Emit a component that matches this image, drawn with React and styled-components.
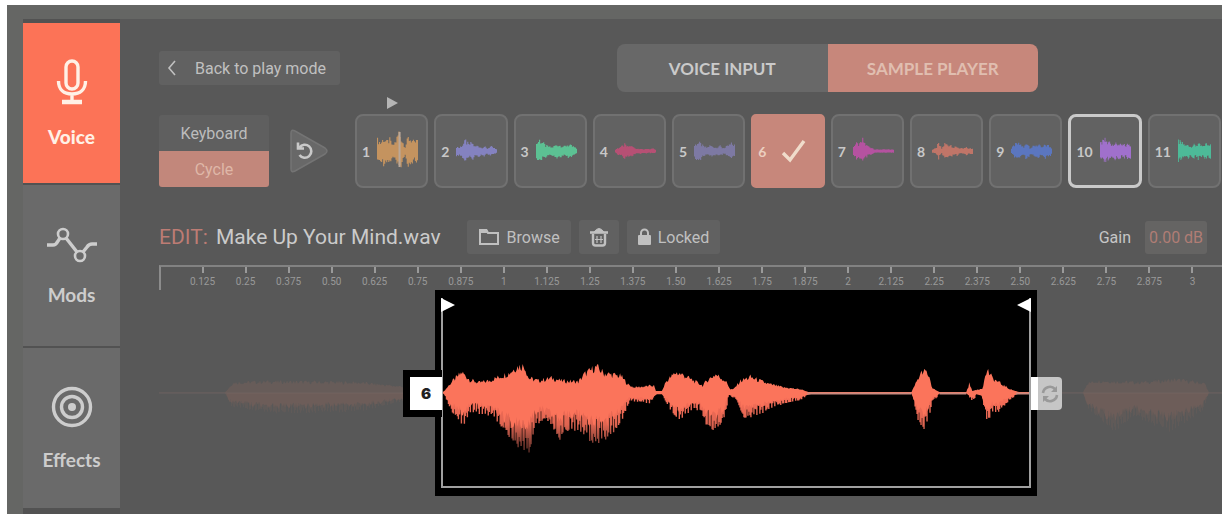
import React from 'react';
import styled, { createGlobalStyle } from 'styled-components';

const GlobalStyle = createGlobalStyle`
  * { box-sizing: border-box; }
  body { margin: 0; background: #fff; }
  button, input { font: inherit; color: inherit; border: 0; margin: 0; padding: 0; }
  button { cursor: pointer; }
  svg { display: block; }
`;

const Frame = styled.div`
  margin: 5px 4px 4px 7px;
  padding: 14px 0 0 16px;
  background: #656664;
  color: #c6c6c6;
  font-family: Roboto, sans-serif;
  font-size: 16px;
`;

const Shell = styled.div`
  display: flex;
  background: #585858;
`;

const Sidebar = styled.nav`
  flex: 0 0 97px;
  display: flex;
  flex-direction: column;
  gap: 2px;
  padding: 4px 0 6px;
  background: #525252;
`;

const SideButton = styled.button`
  flex: 1;
  display: flex;
  flex-direction: column;
  align-items: center;
  justify-content: center;
  gap: 22px;
  background: ${(p) => (p.$active ? '#fc7357' : '#6a6a6a')};
  color: ${(p) => (p.$active ? '#fff1e6' : '#cdcdcd')};
  font-family: Lato, sans-serif;
  font-size: 19px;
  line-height: 20px;
  font-weight: ${(p) => (p.$active ? 900 : 700)};
`;

const Main = styled.main`
  flex: 1;
  min-width: 0;
  padding: 25px 0 0 39px;
`;

const Header = styled.div`
  display: flex;
  align-items: center;
  justify-content: space-between;
  padding-right: 184px;
`;

const FlatButton = styled.button`
  display: flex;
  align-items: center;
  justify-content: center;
  gap: 7px;
  height: 34px;
  padding: 0 11px;
  border-radius: 3px;
  background: #616161;
  color: #c0c0c0;
`;

const BackButton = styled(FlatButton)`
  gap: 18px;
  padding: 0 14px 0 8px;
`;

const Tabs = styled.div`
  display: grid;
  grid-template-columns: 1fr 1fr;
  width: 421px;
  height: 48px;
  border-radius: 8px;
  overflow: hidden;
`;

const Tab = styled.button`
  background: ${(p) => (p.$active ? '#c7877b' : '#686868')};
  color: ${(p) => (p.$active ? '#e0beb0' : '#cacaca')};
  font-family: Lato, sans-serif;
  font-size: 17px;
  font-weight: 700;
`;

const SampleRow = styled.div`
  display: flex;
  align-items: center;
  margin-top: 22px;
  padding-right: 1px;
`;

const ModeSwitch = styled.div`
  flex: 0 0 110px;
  display: grid;
  grid-template-rows: 36px 36px;
  border-radius: 3px;
  overflow: hidden;
`;

const ModeButton = styled.button`
  background: ${(p) => (p.$active ? '#c2877b' : '#5f5f5f')};
  color: ${(p) => (p.$active ? '#dfb7a8' : '#bcbcbc')};
`;

const CycleButton = styled.button`
  margin: 0 26px 0 20px;
  background: none;
`;

const Slots = styled.div`
  flex: 1;
  display: grid;
  grid-template-columns: repeat(11, minmax(0, 1fr));
  gap: 6px;
`;

const Slot = styled.button`
  position: relative;
  height: 74px;
  display: flex;
  align-items: center;
  gap: 7px;
  padding: 0 ${(p) => (p.$active ? 16 : 8)}px 0 5px;
  border: ${(p) => (p.$focused ? '3px solid #cacaca' : '2px solid #717171')};
  border-radius: 8px;
  background: #626262;
  color: #c8c8c8;
  font-family: Lato, sans-serif;
  font-size: 14px;
  font-weight: 700;
  ${(p) => p.$active && 'background: #c7877b; border-color: #c7877b; border-radius: 5px; color: #ebcfc0; justify-content: space-between;'}

  svg { min-width: 0; }
`;

const PlayMarker = styled.span`
  position: absolute;
  top: -19px;
  left: 50%;
  margin-left: -6px;
`;

const EditRow = styled.div`
  display: flex;
  align-items: center;
  gap: 8px;
  margin-top: 32px;
  padding-right: 15px;
`;

const FileName = styled.h1`
  margin: 0 18px 0 0;
  font-size: 21px;
  line-height: 24px;
  font-weight: 400;
  white-space: nowrap;
  color: #cbcbcb;
`;

const Accent = styled.span`
  margin-right: 3px;
  color: #bd7c74;
`;

const Gain = styled.label`
  display: flex;
  align-items: center;
  gap: 14px;
  margin-left: auto;
`;

const GainInput = styled.input`
  width: 62px;
  height: 33px;
  border-radius: 3px;
  background: #656463;
  color: #b07d75;
  text-align: center;
`;

const Ruler = styled.div`
  display: grid;
  grid-template-columns: repeat(24, minmax(0, 1fr));
  height: 25px;
  margin-top: 11px;
  padding: 0 8px 0 20px;
  border-top: 2px solid #828282;
  border-left: 2px solid #8c8c8c;
`;

const Mark = styled.span`
  display: flex;
  flex-direction: column;
  align-items: center;
  gap: 3px;
  font-size: 10px;
  line-height: 12px;
  color: #999;

  &::before {
    content: '';
    width: 2px;
    height: 6px;
    background: #9a9a9a;
  }
`;

const Editor = styled.section`
  display: grid;
  grid-template-columns: 276fr 602fr 185fr;
  height: 224px;

  > svg {
    width: 100%;
    height: 206px;
  }
`;

const Selection = styled.div`
  position: relative;
  height: 206px;
  padding: 8px 6px;
  background: #000;
`;

const SelectionBody = styled.div`
  height: 190px;
  border: 2px solid #a0a0a0;
  border-top: 0;

  svg {
    width: 100%;
    height: 188px;
  }
`;

const Flag = styled.span`
  position: absolute;
  top: 8px;
  ${(p) => p.$side}: 6px;
`;

const StartHandle = styled.button`
  position: absolute;
  top: 80px;
  left: -32px;
  width: 39px;
  height: 47px;
  border: 7px solid #000;
  border-right: 0;
  background: #fff;
  color: #222;
  font-family: Inter, sans-serif;
  font-size: 15px;
  font-weight: 900;
`;

const LoopHandle = styled.button`
  position: absolute;
  top: 87px;
  right: -25px;
  display: flex;
  align-items: center;
  justify-content: center;
  width: 31px;
  height: 33px;
  border-left: 7px solid #fff;
  border-radius: 0 4px 4px 0;
  background: #c6c6c6;
`;

// Envelopes are [x, height] pairs, linear between the points.
const TOP = [[0, 1], [1, 2], [9, 12], [19, 22], [27, 14], [36, 11], [46, 13], [56, 17], [66, 21], [74, 28], [82, 29], [86, 16], [96, 13], [109, 16], [119, 13], [136, 12], [142, 20], [154, 28], [162, 21], [179, 18], [186, 9], [192, 6], [212, 8], [214, 2], [220, 2], [224, 12], [234, 22], [242, 19], [252, 13], [261, 8], [266, 14], [274, 20], [284, 13], [289, 4], [292, 4], [299, 13], [309, 17], [326, 10], [342, 6], [359, 4], [367, 1], [471, 1], [476, 12], [482, 24], [487, 21], [492, 5], [497, 2], [499, 1], [526, 1], [529, 10], [532, 2], [542, 5], [547, 25], [552, 16], [562, 9], [572, 3], [579, 1], [589, 1]];
const BOTTOM = [[0, 1], [1, 2], [9, 20], [20, 33], [29, 18], [36, 20], [49, 23], [62, 40], [76, 56], [86, 62], [92, 30], [106, 27], [116, 46], [122, 40], [136, 36], [149, 48], [162, 48], [176, 34], [187, 8], [207, 10], [215, 2], [220, 2], [226, 13], [236, 28], [252, 15], [258, 18], [262, 28], [271, 39], [281, 30], [287, 3], [294, 6], [302, 26], [312, 22], [322, 19], [332, 13], [346, 10], [359, 7], [366, 3], [372, 1], [471, 1], [477, 27], [483, 37], [489, 19], [492, 7], [496, 5], [499, 1], [526, 1], [532, 8], [536, 2], [541, 4], [547, 32], [552, 18], [557, 20], [562, 14], [572, 5], [579, 1], [589, 1]];

const GHOST_LEFT_TOP = [[0, 0.5], [66, 0.5], [74, 11], [110, 12], [200, 11], [240, 7], [276, 6]];
const GHOST_LEFT_BOTTOM = [[0, 0.5], [66, 0.5], [72, 14], [120, 20], [200, 18], [240, 9], [276, 7]];
const GHOST_RIGHT_TOP = [[0, 0.5], [46, 0.5], [50, 10], [60, 13], [100, 11], [140, 14], [168, 10], [172, 0.5], [185, 0.5]];
const GHOST_RIGHT_BOTTOM = [[0, 0.5], [46, 0.5], [50, 16], [78, 40], [95, 22], [132, 38], [165, 18], [172, 0.5], [185, 0.5]];

const noise = (n) => {
  const v = Math.sin(n * 12.9898) * 43758.5453;
  return v - Math.floor(v);
};

const at = (points, x) => {
  const i = points.findIndex((p) => p[0] >= x);
  if (i < 1) return points[i < 0 ? points.length - 1 : 0][1];
  const [x0, y0] = points[i - 1];
  const [x1, y1] = points[i];
  return y0 + ((y1 - y0) * (x - x0)) / (x1 - x0);
};

const wavePath = (top, bottom, width, mid, scale) => {
  let up = '';
  let down = '';
  for (let x = 0; x <= width; x += 1) {
    const t = at(top, x);
    const b = at(bottom, x) * scale;
    up += `L${x} ${(mid - t * (t > 3 ? 0.75 + noise(x) * 0.35 : 1)).toFixed(1)}`;
    down = `L${x} ${(mid + b * (b > 4 ? 0.7 + noise(x + 700) * 0.5 : 1)).toFixed(1)}${down}`;
  }
  return `M0 ${mid}${up}${down}Z`;
};

// Thin one-pixel strokes hanging below the body of the wave.
const spikes = (bottom, width, mid) => {
  let d = '';
  for (let x = 1; x < width; x += 1) {
    const b = at(bottom, x);
    const len = b * (x % 3 === 0 ? 0.9 + noise(x) * 0.15 : 0.5 + noise(x + 31) * 0.5);
    if (b > 4) d += `M${x + 0.5} ${mid}V${(mid + len).toFixed(1)}`;
  }
  return d;
};

const Waveform = () => (
  <svg viewBox="0 0 589 188" preserveAspectRatio="none" aria-hidden="true">
    <defs>
      <linearGradient id="tail" gradientUnits="userSpaceOnUse" x1="0" y1="95" x2="0" y2="158">
        <stop offset="0" stopColor="#f9705a" />
        <stop offset="0.5" stopColor="#f9705a" stopOpacity="0.9" />
        <stop offset="1" stopColor="#e0705f" stopOpacity="0.35" />
      </linearGradient>
    </defs>
    <path d={spikes(BOTTOM, 589, 95)} stroke="url(#tail)" strokeWidth="1.4" />
    <path d={wavePath(TOP, BOTTOM, 589, 95, 0.62)} fill="#fb745b" />
    <path d="M366 95.5H471M499 95.5H526M576 95.5H589" stroke="#c98a80" strokeWidth="2" />
  </svg>
);

const Ghost = ({ top, bottom, width }) => (
  <svg viewBox={`0 0 ${width} 206`} preserveAspectRatio="none" aria-hidden="true">
    <path d={`M0 103H${width}`} stroke="#6e6866" opacity="0.6" />
    <path d={spikes(bottom, width, 103)} stroke="#93695c" opacity="0.14" />
    <path d={wavePath(top, bottom, width, 103, 0.7)} fill="#93695c" opacity="0.26" />
  </svg>
);

const slots = [
  { color: '#c4935f', env: [11, 8, 12, 9, 11, 5, 10, 19, 10, 4, 13, 11, 8, 11] },
  { color: '#8482c0', env: [4, 3, 6, 10, 6, 8, 4, 5, 3, 4, 2, 4, 3, 1] },
  { color: '#5cc193', env: [7, 11, 8, 5, 4, 3, 5, 6, 5, 4, 6, 5, 4, 2] },
  { color: '#b65074', env: [1, 3, 4, 6, 4, 5, 3, 2, 2, 1, 2, 1, 2, 1] },
  { color: '#7d79a3', env: [5, 8, 7, 4, 3, 5, 4, 3, 5, 3, 3, 5, 7, 6] },
  { active: true },
  { color: '#b552a0', env: [5, 7, 6, 11, 6, 4, 3, 1, 1, 1, 1, 1, 1, 1] },
  { color: '#c07568', env: [1, 2, 7, 2, 7, 6, 6, 3, 4, 2, 2, 3, 2, 2] },
  { color: '#5b76bf', env: [2, 6, 7, 6, 3, 9, 3, 4, 6, 5, 3, 6, 5, 3] },
  { color: '#a070cc', env: [7, 9, 11, 8, 9, 6, 8, 6, 7, 5, 6, 5, 7, 6], focused: true },
  { color: '#4dba98', env: [10, 8, 7, 5, 6, 4, 6, 5, 7, 5, 4, 7, 6, 8] },
];

const SlotWave = ({ color, env, seed }) => {
  const points = env.map((h, i) => [i * 3, h]);
  let d = '';
  for (let x = 0; x < 40; x += 1) {
    const h = at(points, x);
    d += `M${x + 0.5} ${(19.5 - h * (0.6 + noise(x + seed) * 0.6)).toFixed(1)}V${(20.8 + h * (0.6 + noise(x + seed * 7) * 0.6)).toFixed(1)}`;
  }
  return (
    <svg width="41" height="40" viewBox="0 0 40 40" preserveAspectRatio="none" aria-hidden="true">
      <path d={d} stroke={color} strokeWidth="1.1" />
      {seed === 1 && <path d="M22 1V36" stroke="#b9a89a" strokeWidth="2" />}
    </svg>
  );
};

const marks = ['0.125', '0.25', '0.375', '0.50', '0.625', '0.75', '0.875', '1', '1.125', '1.25', '1.375', '1.50',
  '1.625', '1.75', '1.875', '2', '2.125', '2.25', '2.375', '2.50', '2.625', '2.75', '2.875', '3'];

const MicIcon = () => (
  <svg width="32" height="46" viewBox="0 0 32 46" fill="none" stroke="currentColor" strokeWidth="3.4">
    <rect x="10" y="2" width="12" height="28" rx="6" />
    <path d="M2.5 22c0 8.5 5.5 13 13.500 13s13.500-4.500 13.500-13M16 35v7" />
    <path d="M6 43h20" strokeWidth="4.5" />
  </svg>
);

const ModsIcon = () => (
  <svg width="52" height="38" viewBox="0 0 52 38" fill="none" stroke="currentColor" strokeWidth="3.4">
    <path d="M1 20h6q3 0 5-4l2-3M20 13l11 14M37 27l4-5q2-3 5-3h5" />
    <circle cx="17" cy="9" r="5" strokeWidth="2.6" />
    <circle cx="34" cy="31" r="5" strokeWidth="2.6" />
  </svg>
);

const EffectsIcon = () => (
  <svg width="42" height="42" viewBox="0 0 42 42" fill="none" stroke="currentColor" strokeWidth="3.4">
    <circle cx="21" cy="21" r="18.500" />
    <circle cx="21" cy="21" r="10.500" />
    <circle cx="21" cy="21" r="4" fill="currentColor" stroke="none" />
  </svg>
);

const App = () => (
  <>
    <GlobalStyle />
    <Frame>
      <Shell>
        <Sidebar>
          <SideButton $active><MicIcon />Voice</SideButton>
          <SideButton><ModsIcon />Mods</SideButton>
          <SideButton><EffectsIcon />Effects</SideButton>
        </Sidebar>

        <Main>
          <Header>
            <BackButton>
              <svg width="10" height="16" viewBox="0 0 10 16" fill="none" stroke="currentColor" strokeWidth="1.6">
                <path d="M8 1L2 8l6 7" />
              </svg>
              Back to play mode
            </BackButton>
            <Tabs>
              <Tab>VOICE INPUT</Tab>
              <Tab $active>SAMPLE PLAYER</Tab>
            </Tabs>
          </Header>

          <SampleRow>
            <ModeSwitch>
              <ModeButton>Keyboard</ModeButton>
              <ModeButton $active>Cycle</ModeButton>
            </ModeSwitch>
            <CycleButton aria-label="Restart cycle">
              <svg width="40" height="46" viewBox="0 0 40 46">
                <path d="M2 5q0-4 4-2l30 17q4 3 0 6L6 43q-4 2-4-2z" fill="#686868" stroke="#747474" strokeWidth="1.5" />
                <path d="M10.500 19.500A6.500 6.500 0 1 1 10.500 27M9 14.500v6h6" fill="none" stroke="#c9c9c9" strokeWidth="2.6" />
              </svg>
            </CycleButton>
            <Slots>
              {slots.map((slot, i) => (
                <Slot key={i} $active={slot.active} $focused={slot.focused}>
                  {i === 0 && (
                    <PlayMarker>
                      <svg width="12" height="12" viewBox="0 0 12 12"><path d="M1 0l11 6-11 6z" fill="#b5b5b5" /></svg>
                    </PlayMarker>
                  )}
                  {i + 1}
                  {slot.active ? (
                    <svg width="26" height="26" viewBox="0 0 26 26" fill="none" stroke="#f0dccb" strokeWidth="3.4">
                      <path d="M2 15l7 7L23 3" />
                    </svg>
                  ) : <SlotWave color={slot.color} env={slot.env} seed={i + 1} />}
                </Slot>
              ))}
            </Slots>
          </SampleRow>

          <EditRow>
            <FileName><Accent>EDIT:</Accent> Make Up Your Mind.wav</FileName>
            <FlatButton>
              <svg width="22" height="18" viewBox="0 0 22 18">
                <path d="M2 4v12h18V5H10L8 2H2z" fill="none" stroke="currentColor" strokeWidth="2" />
                <path d="M1 1h8l2 4H1z" fill="currentColor" />
              </svg>
              Browse
            </FlatButton>
            <FlatButton aria-label="Delete">
              <svg width="18" height="20" viewBox="0 0 18 20" fill="none" stroke="currentColor">
                <path d="M0 5.500h18" strokeWidth="2.6" />
                <path d="M4 5q5-7 10 0z" fill="currentColor" />
                <path d="M3 7v9q0 2.500 2.500 2.500h7q2.500 0 2.500-2.500V7" strokeWidth="2.400" />
                <path d="M7 9v7M11 9v7M5 12.500h8" strokeWidth="1.200" />
              </svg>
            </FlatButton>
            <FlatButton>
              <svg width="13" height="18" viewBox="0 0 13 18">
                <path d="M3 8V5a3.500 3.500 0 0 1 7 0v3" fill="none" stroke="currentColor" strokeWidth="2" />
                <rect y="7" width="13" height="10" rx="1" fill="currentColor" />
              </svg>
              Locked
            </FlatButton>
            <Gain>
              Gain
              <GainInput type="text" defaultValue="0.00 dB" />
            </Gain>
          </EditRow>

          <Ruler>
            {marks.map((m) => <Mark key={m}>{m}</Mark>)}
          </Ruler>

          <Editor>
            <Ghost top={GHOST_LEFT_TOP} bottom={GHOST_LEFT_BOTTOM} width={276} />
            <Selection>
              <SelectionBody><Waveform /></SelectionBody>
              <Flag $side="left">
                <svg width="14" height="14" viewBox="0 0 14 14"><path d="M0 0l14 7-14 7z" fill="#fff" /></svg>
              </Flag>
              <Flag $side="right">
                <svg width="14" height="14" viewBox="0 0 14 14"><path d="M14 0L0 7l14 7z" fill="#fff" /></svg>
              </Flag>
              <StartHandle>6</StartHandle>
              <LoopHandle aria-label="Loop">
                <svg width="18" height="18" viewBox="0 0 18 18" fill="none" stroke="#999" strokeWidth="2.600">
                  <path d="M2 8a7 7 0 0 1 12-4M16 10a7 7 0 0 1-12 4" />
                  <path d="M16 1v6h-6zM2 17v-6h6z" fill="#999" stroke="none" />
                </svg>
              </LoopHandle>
            </Selection>
            <Ghost top={GHOST_RIGHT_TOP} bottom={GHOST_RIGHT_BOTTOM} width={185} />
          </Editor>
        </Main>
      </Shell>
    </Frame>
  </>
);

export default App;
